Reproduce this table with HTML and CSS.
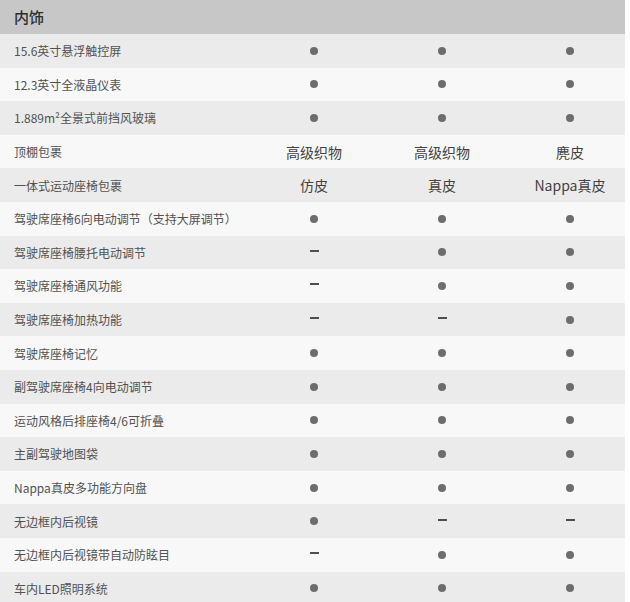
FILE: index.html
```html
<!DOCTYPE html>
<html lang="zh">
<head>
<meta charset="utf-8">
<link rel="stylesheet" href="styles.css">
</head>
<body>
<div class="table">
  <div class="head">内饰</div>
  <div class="row"><div class="label">15.6英寸悬浮触控屏</div><div class="cell"><i class="dot"></i></div><div class="cell"><i class="dot"></i></div><div class="cell"><i class="dot"></i></div></div>
  <div class="row"><div class="label">12.3英寸全液晶仪表</div><div class="cell"><i class="dot"></i></div><div class="cell"><i class="dot"></i></div><div class="cell"><i class="dot"></i></div></div>
  <div class="row"><div class="label">1.889m²全景式前挡风玻璃</div><div class="cell"><i class="dot"></i></div><div class="cell"><i class="dot"></i></div><div class="cell"><i class="dot"></i></div></div>
  <div class="row"><div class="label">顶棚包裹</div><div class="cell text">高级织物</div><div class="cell text">高级织物</div><div class="cell text">麂皮</div></div>
  <div class="row"><div class="label">一体式运动座椅包裹</div><div class="cell text">仿皮</div><div class="cell text">真皮</div><div class="cell text">Nappa真皮</div></div>
  <div class="row"><div class="label">驾驶席座椅6向电动调节（支持大屏调节）</div><div class="cell"><i class="dot"></i></div><div class="cell"><i class="dot"></i></div><div class="cell"><i class="dot"></i></div></div>
  <div class="row"><div class="label">驾驶席座椅腰托电动调节</div><div class="cell"><i class="dash"></i></div><div class="cell"><i class="dot"></i></div><div class="cell"><i class="dot"></i></div></div>
  <div class="row"><div class="label">驾驶席座椅通风功能</div><div class="cell"><i class="dash"></i></div><div class="cell"><i class="dot"></i></div><div class="cell"><i class="dot"></i></div></div>
  <div class="row"><div class="label">驾驶席座椅加热功能</div><div class="cell"><i class="dash"></i></div><div class="cell"><i class="dash"></i></div><div class="cell"><i class="dot"></i></div></div>
  <div class="row"><div class="label">驾驶席座椅记忆</div><div class="cell"><i class="dot"></i></div><div class="cell"><i class="dot"></i></div><div class="cell"><i class="dot"></i></div></div>
  <div class="row"><div class="label">副驾驶席座椅4向电动调节</div><div class="cell"><i class="dot"></i></div><div class="cell"><i class="dot"></i></div><div class="cell"><i class="dot"></i></div></div>
  <div class="row"><div class="label">运动风格后排座椅4/6可折叠</div><div class="cell"><i class="dot"></i></div><div class="cell"><i class="dot"></i></div><div class="cell"><i class="dot"></i></div></div>
  <div class="row"><div class="label">主副驾驶地图袋</div><div class="cell"><i class="dot"></i></div><div class="cell"><i class="dot"></i></div><div class="cell"><i class="dot"></i></div></div>
  <div class="row"><div class="label">Nappa真皮多功能方向盘</div><div class="cell"><i class="dot"></i></div><div class="cell"><i class="dot"></i></div><div class="cell"><i class="dot"></i></div></div>
  <div class="row"><div class="label">无边框内后视镜</div><div class="cell"><i class="dot"></i></div><div class="cell"><i class="dash"></i></div><div class="cell"><i class="dash"></i></div></div>
  <div class="row"><div class="label">无边框内后视镜带自动防眩目</div><div class="cell"><i class="dash"></i></div><div class="cell"><i class="dot"></i></div><div class="cell"><i class="dot"></i></div></div>
  <div class="row"><div class="label">车内LED照明系统</div><div class="cell"><i class="dot"></i></div><div class="cell"><i class="dot"></i></div><div class="cell"><i class="dot"></i></div></div>
</div>
</body>
</html>
```

FILE: styles.css
```css
html, body {
  margin: 0;
  padding: 0;
  background: #ffffff;
}
body {
  font-family: "Noto Sans CJK SC", "Noto Sans", sans-serif;
  width: 630px;
  height: 602px;
  overflow: hidden;
}
.table {
  width: 625px;
}
.head {
  height: 34px;
  background: #c7c7c7;
  color: #2e2e2e;
  font-size: 15px;
  font-weight: 500;
  line-height: 34px;
  padding-left: 14px;
  box-sizing: border-box;
}
.row {
  height: 33.6px;
  display: grid;
  grid-template-columns: 250px 128px 128px 119px;
  align-items: center;
  background: #f8f8f8;
}
.row:nth-child(even) {
  background: #ebebeb;
}
.label {
  padding-left: 14px;
  font-size: 12px;
  color: #525252;
  white-space: nowrap;
}
.cell {
  display: flex;
  justify-content: center;
  align-items: center;
}
.cell:last-child {
  padding-left: 9px;
}
.text {
  font-size: 14px;
  color: #424242;
  white-space: nowrap;
}
.dot {
  width: 8px;
  height: 8px;
  border-radius: 50%;
  background: #6d6d6d;
}
.dash {
  width: 9px;
  height: 2px;
  background: #4f4f4f;
  margin-top: -3px;
}
```
